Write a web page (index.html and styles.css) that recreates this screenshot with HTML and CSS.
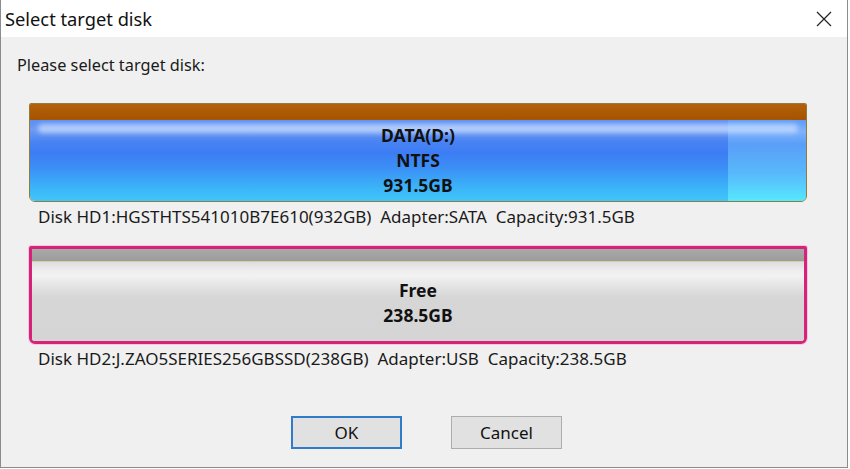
FILE: index.html
```html
<!DOCTYPE html>
<html>
<head>
<meta charset="utf-8">
<link rel="stylesheet" href="styles.css">
</head>
<body>
<div class="window">
  <div class="titlebar">
    <span class="title">Select target disk</span>
    <svg class="close" width="16" height="16" viewBox="0 0 16 16"><path d="M1 1 L15 15 M15 1 L1 15" stroke="#222" stroke-width="1.2" fill="none"/></svg>
  </div>
  <div class="content">
    <div class="prompt">Please select target disk:</div>
    <div class="disk disk1">
      <div class="stripe orange"></div>
      <div class="partbody blue">
        <div class="shine"></div>
        <div class="label">DATA(D:)<br>NTFS<br>931.5GB</div>
      </div>
    </div>
    <div class="info">Disk HD1:HGSTHTS541010B7E610(932GB)&nbsp; Adapter:SATA&nbsp; Capacity:931.5GB</div>
    <div class="disk disk2">
      <div class="stripe grey"></div>
      <div class="partbody free">
        <div class="label">Free<br>238.5GB</div>
      </div>
    </div>
    <div class="info">Disk HD2:J.ZAO5SERIES256GBSSD(238GB)&nbsp; Adapter:USB&nbsp; Capacity:238.5GB</div>
    <div class="buttons">
      <button class="btn default">OK</button>
      <button class="btn">Cancel</button>
    </div>
  </div>
</div>
</body>
</html>
```
FILE: styles.css
```css
html, body {
  margin: 0;
  padding: 0;
  background: #ffffff;
  font-family: "Noto Sans", "Open Sans", sans-serif;
  color: #1a1a1a;
}
.window {
  width: 848px;
  height: 468px;
  box-sizing: border-box;
  border: 1px solid #8c8c8c;
  border-top: none;
  display: flex;
  flex-direction: column;
}
.titlebar {
  height: 37px;
  flex: none;
  background: #ffffff;
  display: flex;
  align-items: center;
  justify-content: space-between;
  padding: 0 15px 0 4px;
}
.title {
  font-size: 18.3px;
  color: #111;
  margin-top: 0;
}
.close {
  display: block;
}
.content {
  flex: 1;
  background: #f0f0f0;
  display: flex;
  flex-direction: column;
  padding: 0 0 0 28px;
}
.prompt {
  font-size: 16.3px;
  line-height: 20px;
  margin: 18px 0 0 -12px;
}
.disk {
  width: 778px;
  box-sizing: border-box;
  display: flex;
  flex-direction: column;
  border-radius: 2px 2px 6px 6px;
  overflow: hidden;
}
.disk1 {
  margin-top: 28px;
  height: 99px;
  border: 1px solid #8a7c4c;
  box-shadow: 0 0 0 1px #f6efdc;
}
.disk2 {
  margin-top: 19px;
  height: 98px;
  border: 3px solid #d6237a;
  box-shadow: 0 0 0 1px #f4c8de;
}
.stripe {
  flex: none;
}
.orange {
  height: 16px;
  background: linear-gradient(#b4600a, #a55300);
}
.grey {
  height: 12px;
  background: linear-gradient(#a9a9a9, #9c9c9c);
  border-bottom: 1px solid #d4d29c;
}
.partbody {
  flex: 1;
  position: relative;
  display: flex;
  align-items: center;
  justify-content: center;
}
.blue {
  background:
    linear-gradient(#5e9cf7 0%, #7fb2fb 14%, #5a9ef8 30%, #58b8fb 65%, #56e8fe 100%) right / 78px 100% no-repeat,
    linear-gradient(#5b8ff0 0%, #6f9af2 12%, #4a84f3 26%, #3d7cf4 40%, #3b90f6 60%, #3bb2f8 82%, #40c6f9 100%);
}
.shine {
  position: absolute;
  left: 8px;
  right: 8px;
  top: 4px;
  height: 9px;
  border-radius: 5px;
  background: rgba(200, 222, 255, 0.75);
  filter: blur(2.5px);
}
.free {
  background: linear-gradient(#dedede 0%, #efefef 12%, #f2f2f2 18%, #e2e2e2 32%, #d6d6d6 45%, #d5d5d5 100%);
}
.label {
  position: relative;
  text-align: center;
  font-weight: bold;
  font-size: 17.5px;
  line-height: 25px;
  color: #111;
}
.disk2 .label {
  margin-top: 3px;
}
.info {
  font-size: 17px;
  line-height: 20px;
  margin: 5px 0 0 9px;
}
.buttons {
  display: flex;
  gap: 49px;
  margin: 47px 0 0 262px;
}
.btn {
  width: 111px;
  height: 33px;
  box-sizing: border-box;
  background: #e1e1e1;
  border: 1px solid #adadad;
  font-family: "Noto Sans", "Open Sans", sans-serif;
  font-size: 17px;
  color: #111;
  padding: 0;
}
.btn.default {
  border: 2px solid #2f7ccb;
}
```
